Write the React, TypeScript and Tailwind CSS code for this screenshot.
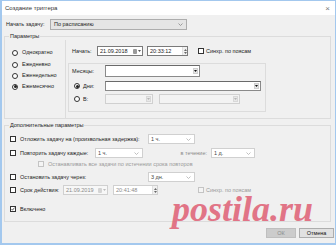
import type { ReactNode } from 'react';

const Chevron = ({ dim = false }: { dim?: boolean }) => (
  <svg width="5" height="3" viewBox="0 0 5 3" className="shrink-0">
    <polyline points="0.5,0.5 2.5,2.5 4.5,0.5" fill="none" stroke={dim ? '#b0b0b0' : '#888'} strokeWidth="0.8" />
  </svg>
);

const DropBtn = ({ disabled = false }: { disabled?: boolean }) => (
  <span
    className={`ml-auto mr-[1px] w-[5px] h-[6px] flex items-center justify-center border ${
      disabled ? 'border-[#d8d8d8] bg-[#e8e8e8]' : 'border-[#cfcfcf] bg-[#e6e6e6]'
    }`}
  >
    <svg width="3" height="2" viewBox="0 0 3 2">
      <polygon points="0,0 3,0 1.5,2" fill={disabled ? '#b5b5b5' : '#111'} />
    </svg>
  </span>
);

const Radio = ({ checked = false }: { checked?: boolean }) => (
  <span className="w-[6px] h-[6px] rounded-full border border-[#333] bg-white flex items-center justify-center shrink-0">
    {checked && <span className="w-[3px] h-[3px] rounded-full bg-[#222]" />}
  </span>
);

const Check = ({ checked = false, disabled = false }: { checked?: boolean; disabled?: boolean }) => (
  <span
    className={`w-[6px] h-[6px] border flex items-center justify-center shrink-0 ${
      disabled ? 'border-[#c4c4c4] bg-[#f4f4f4]' : 'border-[#333] bg-white'
    }`}
  >
    {checked && (
      <svg width="4" height="4" viewBox="0 0 4 4">
        <polyline points="0.5,2 1.5,3.2 3.5,0.6" fill="none" stroke="#222" strokeWidth="0.7" />
      </svg>
    )}
  </span>
);

const Combo = ({ w, text }: { w: string; text: string }) => (
  <div className={`${w} h-[10px] shrink-0 flex items-center bg-white border border-[#d0d0d0] pl-[2px] pr-[3px]`}>
    <span className="text-[#444]">{text}</span>
    <span className="ml-auto">
      <Chevron dim />
    </span>
  </div>
);

const DateBox = ({ w, text, disabled = false }: { w: string; text: string; disabled?: boolean }) => (
  <div
    className={`${w} h-[10px] shrink-0 flex items-center border pl-[2px] pr-[1px] ${
      disabled ? 'border-[#d0d0d0] bg-[#f7f7f7] text-[#8a8a8a]' : 'border-[#7a7a7a] bg-white text-[#222]'
    }`}
  >
    <span>{text}</span>
    <span className="ml-auto flex items-center gap-[1px]">
      <span className={`w-[4px] h-[5px] rounded-[1px] ${disabled ? 'bg-[#d4d4d4]' : 'bg-[#9a9a9a]'}`} />
      <svg width="3" height="2" viewBox="0 0 3 2">
        <polygon points="0,0 3,0 1.5,2" fill={disabled ? '#bbb' : '#555'} />
      </svg>
    </span>
  </div>
);

const TimeBox = ({ w, text, disabled = false }: { w: string; text: string; disabled?: boolean }) => (
  <div
    className={`${w} h-[10px] shrink-0 flex items-center border pl-[2px] ${
      disabled ? 'border-[#d0d0d0] bg-white text-[#8a8a8a]' : 'border-[#7a7a7a] bg-white text-[#222]'
    }`}
  >
    <span>{text}</span>
    <span className="ml-auto h-full w-[5px] flex flex-col items-center justify-center gap-[1px] border-l border-[#e0e0e0] bg-[#f0f0f0]">
      <svg width="3" height="2" viewBox="0 0 3 2">
        <polygon points="0,2 3,2 1.5,0" fill="#666" />
      </svg>
      <svg width="3" height="2" viewBox="0 0 3 2">
        <polygon points="0,0 3,0 1.5,2" fill="#666" />
      </svg>
    </span>
  </div>
);

const Group = ({ title, children }: { title: string; children: ReactNode }) => (
  <fieldset className="ml-[2px] w-[327px] min-w-0 border border-[#dcdcdc]">
    <legend className="ml-[4px] px-[1px] leading-[7px] text-[#222]">{title}</legend>
    {children}
  </fieldset>
);

export default function App() {
  return (
    <div className="relative w-[336px] h-[245px] overflow-hidden whitespace-nowrap bg-[#f0f0f0] border border-l-2 border-b-2 border-[#a3c8ee] font-['Liberation_Sans',sans-serif] text-[5.5px] leading-[7px] text-[#222]">
      {/* Title bar */}
      <div className="h-[14px] bg-white flex items-center justify-between pl-[3px] pr-[5px]">
        <span className="text-[6px] text-[#333]">Создание триггера</span>
        <span className="text-[8px] text-[#777]">×</span>
      </div>

      {/* Start task row */}
      <div className="mt-[4px] h-[11px] flex items-center pl-[4px]">
        <span className="w-[44px]">Начать задачу:</span>
        <div className="w-[137px] h-[11px] flex items-center bg-[#e5e5e5] border border-[#adadad] pl-[3px] pr-[3px]">
          <span>По расписанию</span>
          <span className="ml-auto">
            <Chevron />
          </span>
        </div>
      </div>

      {/* Parameters */}
      <div className="mt-[3px]">
        <Group title="Параметры">
          <div className="flex h-[78px]">
            <div className="w-[61px] border-r border-[#dcdcdc] pt-[7px] pl-[7px]">
              {['Однократно', 'Ежедневно', 'Еженедельно', 'Ежемесячно'].map((t, i) => (
                <div key={t} className={`h-[11px] flex items-center gap-[4px] ${i === 1 ? 'mt-[1px]' : ''}`}>
                  <Radio checked={i === 3} />
                  <span>{t}</span>
                </div>
              ))}
            </div>
            <div className="flex-1">
              <div className="mt-[6px] h-[10px] flex items-center pl-[6px]">
                <span className="w-[25px]">Начать:</span>
                <DateBox w="w-[46px]" text="21.09.2018" />
                <span className="w-[4px]" />
                <TimeBox w="w-[41px]" text="20:33:12" />
                <span className="w-[10px]" />
                <Check />
                <span className="ml-[2px]">Синхр. по поясам</span>
              </div>
              <div className="mt-[7px] ml-[2px] w-[198px] h-[49px] border border-[#dcdcdc]">
                <div className="mt-[1px] h-[12px] flex items-center pl-[3px]">
                  <span className="w-[33px]">Месяцы:</span>
                  <div className="w-[95px] h-[12px] flex items-center bg-white border border-[#8a8a8a] border-t-[#6a6a6a]">
                    <DropBtn />
                  </div>
                </div>
                <div className="mt-[4px] h-[10px] flex items-center pl-[5px]">
                  <Radio checked />
                  <span className="ml-[3px] w-[22px]">Дни:</span>
                  <div className="w-[156px] h-[10px] flex items-center bg-white border border-[#8a8a8a] border-t-[#6a6a6a]">
                    <DropBtn />
                  </div>
                </div>
                <div className="mt-[3px] h-[10px] flex items-center pl-[5px]">
                  <Radio />
                  <span className="ml-[3px] w-[22px]">В:</span>
                  <div className="w-[48px] h-[10px] flex items-center bg-[#f3f3f3] border border-[#d0d0d0]">
                    <DropBtn disabled />
                  </div>
                  <span className="w-[6px]" />
                  <div className="w-[81px] h-[10px] flex items-center bg-[#f3f3f3] border border-[#d0d0d0]">
                    <DropBtn disabled />
                  </div>
                </div>
              </div>
            </div>
          </div>
        </Group>
      </div>

      {/* Additional parameters */}
      <div className="mt-[3px]">
        <Group title="Дополнительные параметры">
          <div className="h-[92px] pl-[5px] pt-[5px]">
            <div className="h-[10px] flex items-center">
              <Check />
              <span className="ml-[4px] w-[128px]">Отложить задачу на (произвольная задержка):</span>
              <Combo w="w-[47px]" text="1 ч." />
            </div>
            <div className="mt-[4px] h-[10px] flex items-center">
              <Check />
              <span className="ml-[4px] w-[75px]">Повторить задачу каждые:</span>
              <Combo w="w-[48px]" text="1 ч." />
              <span className="w-[65px] text-right pr-[1px] text-[#8a8a8a]">в течение:</span>
              <span className="w-[3px]" />
              <Combo w="w-[44px]" text="1 д." />
            </div>
            <div className="mt-[1px] h-[10px] flex items-center pl-[28px]">
              <Check disabled />
              <span className="ml-[4px] text-[#9a9a9a]">Останавливать все задачи по истечении срока повторов</span>
            </div>
            <div className="mt-[3px] h-[10px] flex items-center">
              <Check />
              <span className="ml-[4px] w-[128px]">Остановить задачу через:</span>
              <Combo w="w-[47px]" text="3 дн." />
            </div>
            <div className="mt-[3px] h-[10px] flex items-center">
              <Check />
              <span className="ml-[4px] w-[43px]">Срок действия:</span>
              <DateBox w="w-[45px]" text="21.09.2019" disabled />
              <span className="w-[5px]" />
              <TimeBox w="w-[45px]" text="20:41:48" disabled />
              <span className="w-[40px]" />
              <Check disabled />
              <span className="ml-[2px] text-[#9a9a9a]">Синхр. по поясам</span>
            </div>
            <div className="mt-[9px] h-[10px] flex items-center">
              <Check checked />
              <span className="ml-[4px]">Включено</span>
            </div>
          </div>
        </Group>
      </div>

      {/* Buttons */}
      <div className="mt-[6px] h-[10px] flex justify-end gap-[3px] pr-[1px]">
        <button className="w-[30px] h-[10px] bg-[#cccccc] border border-[#bfbfbf] text-[#8a8a8a] leading-[8px]">ОК</button>
        <button className="w-[35px] h-[10px] bg-[#e1e1e1] border border-[#adadad] text-[#111] leading-[8px]">Отмена</button>
      </div>

      {/* Watermark */}
      <div className="absolute left-[170px] top-[193px] text-[36px] leading-[30px] font-bold italic font-['Liberation_Serif',serif] text-[#e0677b] opacity-90 pointer-events-none">
        postila.ru
      </div>
    </div>
  );
}
